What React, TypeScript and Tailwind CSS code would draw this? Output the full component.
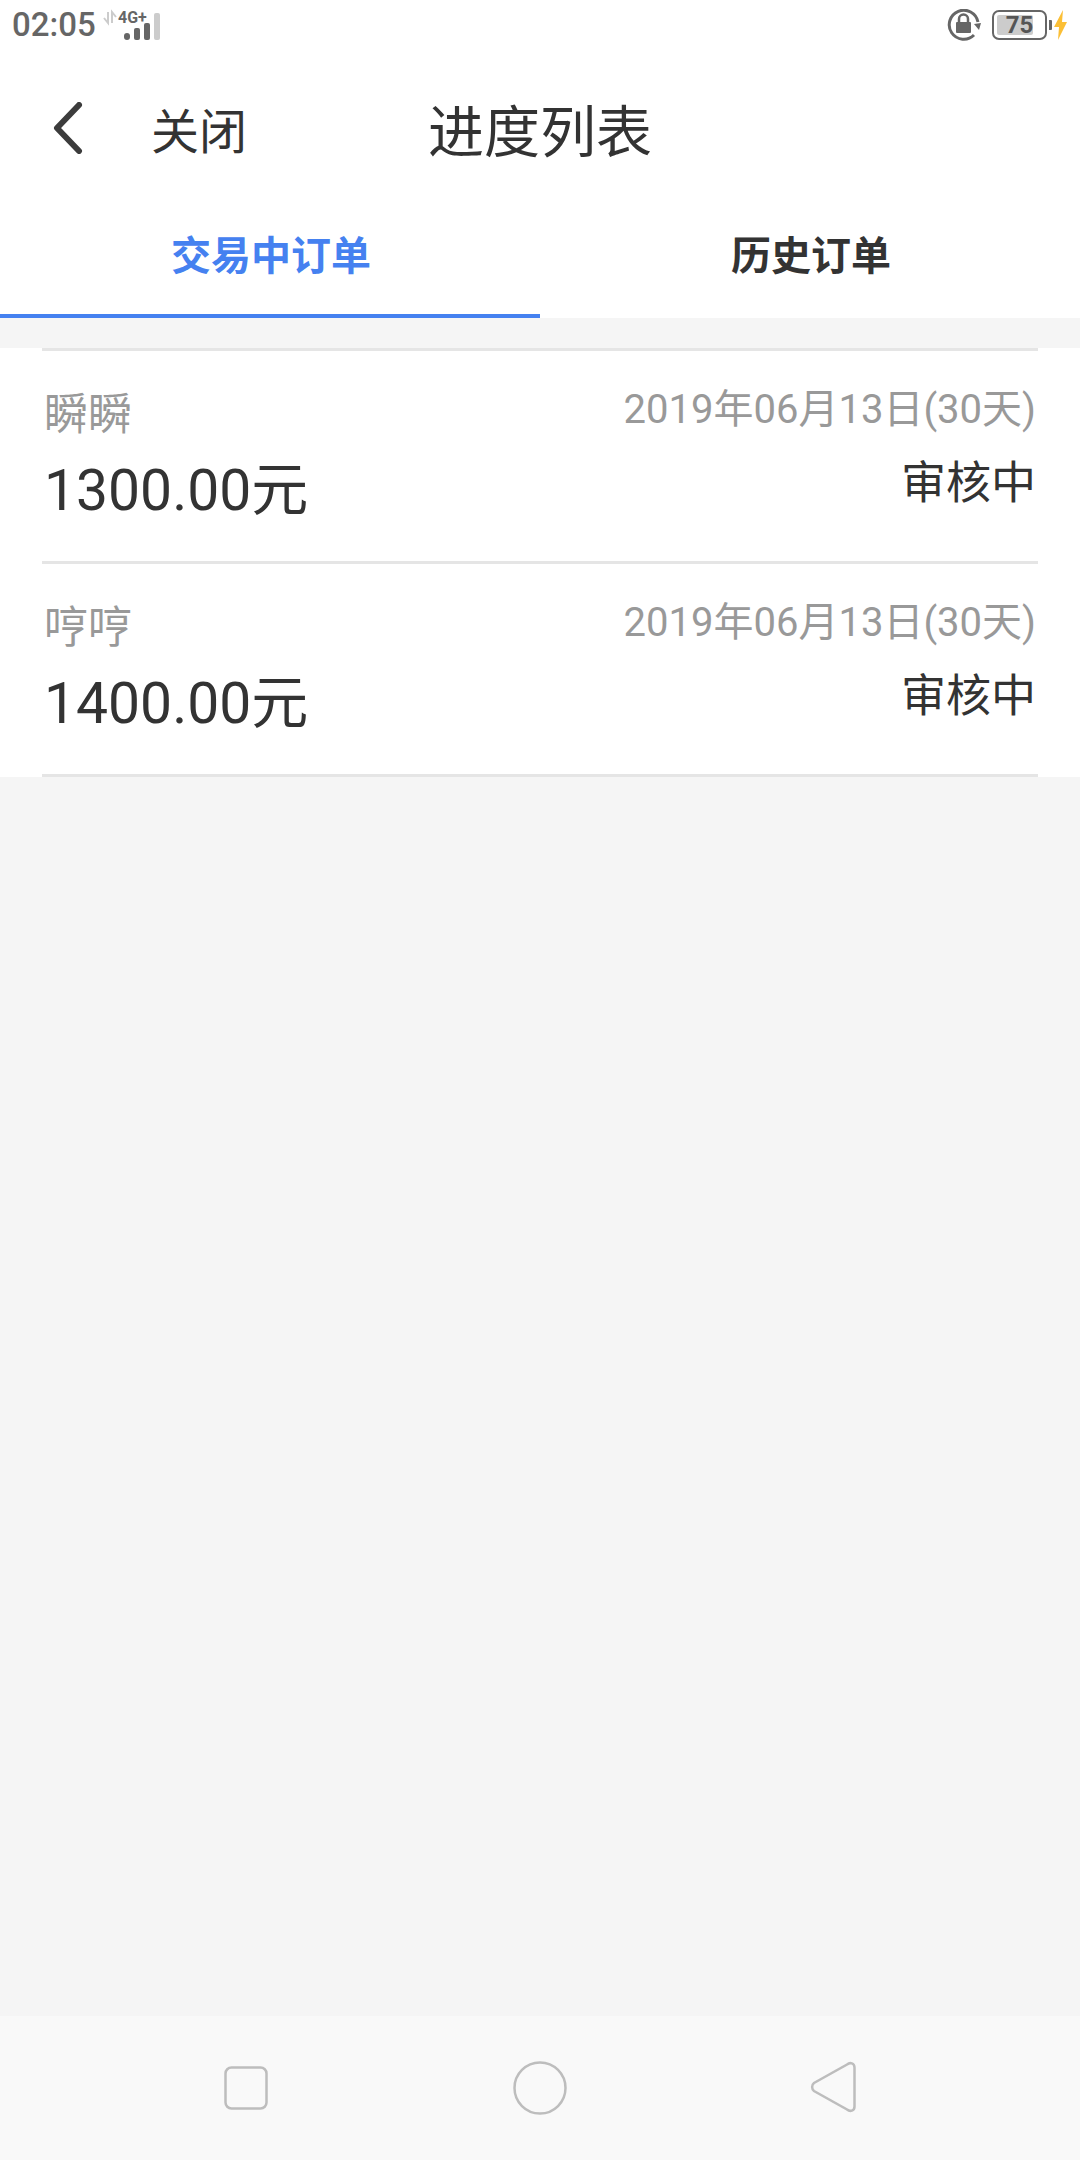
const orders = [
	{ name: "瞬瞬", amount: "1300.00元" },
	{ name: "哼哼", amount: "1400.00元" }
];

function StatusBar() {
	return (
		<div className="h-[50px] flex items-center justify-between pl-[12px] pr-[12px] bg-white">
			<div className="flex items-center">
				<span className="text-[33px] leading-[50px] font-medium text-[#666666]">02:05</span>
				<svg width="60" height="32" viewBox="0 0 60 32" className="ml-[6px] mt-[2px] overflow-visible">
					<path d="M6 2v11l-4-5M10 13V2l4 5" fill="none" stroke="#cccccc" strokeWidth="2" />
					<text x="16" y="13" fontSize="16" fontWeight="700" fill="#666666" fontFamily="Roboto, sans-serif">4G+</text>
					<rect x="22" y="23" width="6" height="7" rx="3" fill="#666666" />
					<rect x="32" y="18" width="6" height="12" rx="2" fill="#666666" />
					<rect x="42" y="13" width="6" height="17" rx="2" fill="#666666" />
					<rect x="52" y="3" width="6" height="27" rx="2" fill="#cccccc" />
				</svg>
			</div>
			<div className="flex items-center">
				<svg width="34" height="32" viewBox="0 0 34 32" className="mr-[11px]">
					<path d="M27 26A14.500 14.500 0 1 1 31 13" fill="none" stroke="#666666" strokeWidth="3" />
					<path d="M27 15l7-1-2 7z" fill="#666666" />
					<rect x="9" y="13" width="15" height="11" rx="1" fill="#666666" />
					<path d="M12 13v-3a4.500 4.500 0 0 1 9 0v3" fill="none" stroke="#666666" strokeWidth="2.500" />
				</svg>
				<div className="relative w-[55px] h-[30px] rounded-[7px] border-[2px] border-[#666666] p-[3px]">
					<div className="h-full w-[36px] bg-[#cccccc] rounded-[2px]" />
					<span className="absolute inset-0 flex items-center justify-center text-[24px] leading-none font-bold text-[#555555]">75</span>
				</div>
				<div className="w-[3px] h-[10px] bg-[#666666] ml-[2px] rounded-r-[1px]" />
				<svg width="14" height="30" viewBox="0 0 14 30" className="ml-[2px]">
					<path d="M9 0L0 17h5l-1 13 9-18H8z" fill="#fbbf36" />
				</svg>
			</div>
		</div>
	);
}

function OrderRow({ name, amount }: { name: string; amount: string }) {
	return (
		<div className="mx-[42px] h-[213px] border-b-[3px] border-[#e5e5e5] flex justify-between">
			<div className="pl-[2px] pt-[34px]">
				<div className="text-[44px] leading-[60px] text-[#999999]">{name}</div>
				<div className="text-[57px] leading-[72px] mt-[10px] text-[#333333]">{amount}</div>
			</div>
			<div className="pr-[2px] pt-[32px] text-right">
				<div className="text-[40px] leading-[54px] text-[#999999]">2019年06月13日(30天)</div>
				<div className="text-[45px] leading-[60px] mt-[17px] text-[#333333]">审核中</div>
			</div>
		</div>
	);
}

export default function App() {
	return (
		<div className="w-[1080px] h-[2160px] flex flex-col bg-[#f5f5f5] font-['Roboto','Noto_Sans_CJK_SC',sans-serif]">
			<StatusBar />

			<div className="relative h-[150px] pt-[16px] bg-white flex items-center">
				<svg width="32" height="52" viewBox="0 0 32 52" className="ml-[52px] mb-[10px]">
					<path d="M27 3L5 26l22 23" fill="none" stroke="#3c3c3c" strokeWidth="6" strokeLinecap="round" strokeLinejoin="round" />
				</svg>
				<span className="ml-[67px] text-[48px] leading-none text-[#333333]">关闭</span>
				<span className="absolute left-0 right-0 text-center text-[56px] leading-none text-[#333333]">进度列表</span>
			</div>

			<div className="h-[118px] bg-white flex">
				<div className="w-[540px] border-b-[4px] border-[#4581f0] pl-[2px] flex items-center justify-center text-[40px] font-bold text-[#4581f0]">
					交易中订单
				</div>
				<div className="w-[540px] pl-[2px] flex items-center justify-center text-[40px] font-bold text-[#333333] pb-[4px]">
					历史订单
				</div>
			</div>

			<div className="mt-[30px] bg-white">
				<div className="mx-[42px] h-[3px] bg-[#e5e5e5]" />
				{orders.map((order) => (
					<OrderRow key={order.name} name={order.name} amount={order.amount} />
				))}
			</div>

			<div className="mt-auto h-[144px] bg-[#f9f9f9] flex items-center">
				<div className="w-[540px] pl-[224px]">
					<svg width="44" height="44" viewBox="0 0 44 44">
						<rect x="1.500" y="1.500" width="41" height="41" rx="6" fill="none" stroke="#bdbdbd" strokeWidth="2.500" />
					</svg>
				</div>
				<div className="flex-1 flex justify-between pr-[224px]">
					<svg width="54" height="54" viewBox="0 0 54 54" className="ml-[-27px]">
						<circle cx="27" cy="27" r="25.500" fill="none" stroke="#bdbdbd" strokeWidth="2.500" />
					</svg>
					<svg width="46" height="52" viewBox="0 0 46 52">
						<path d="M37 3.500c3-2.500 7.500-1.500 7.500 3v39c0 4.500-4.500 5.500-7.500 3L4 30c-2.500-2-2.500-6 0-8z" fill="none" stroke="#bdbdbd" strokeWidth="2.500" />
					</svg>
				</div>
			</div>
		</div>
	);
}
